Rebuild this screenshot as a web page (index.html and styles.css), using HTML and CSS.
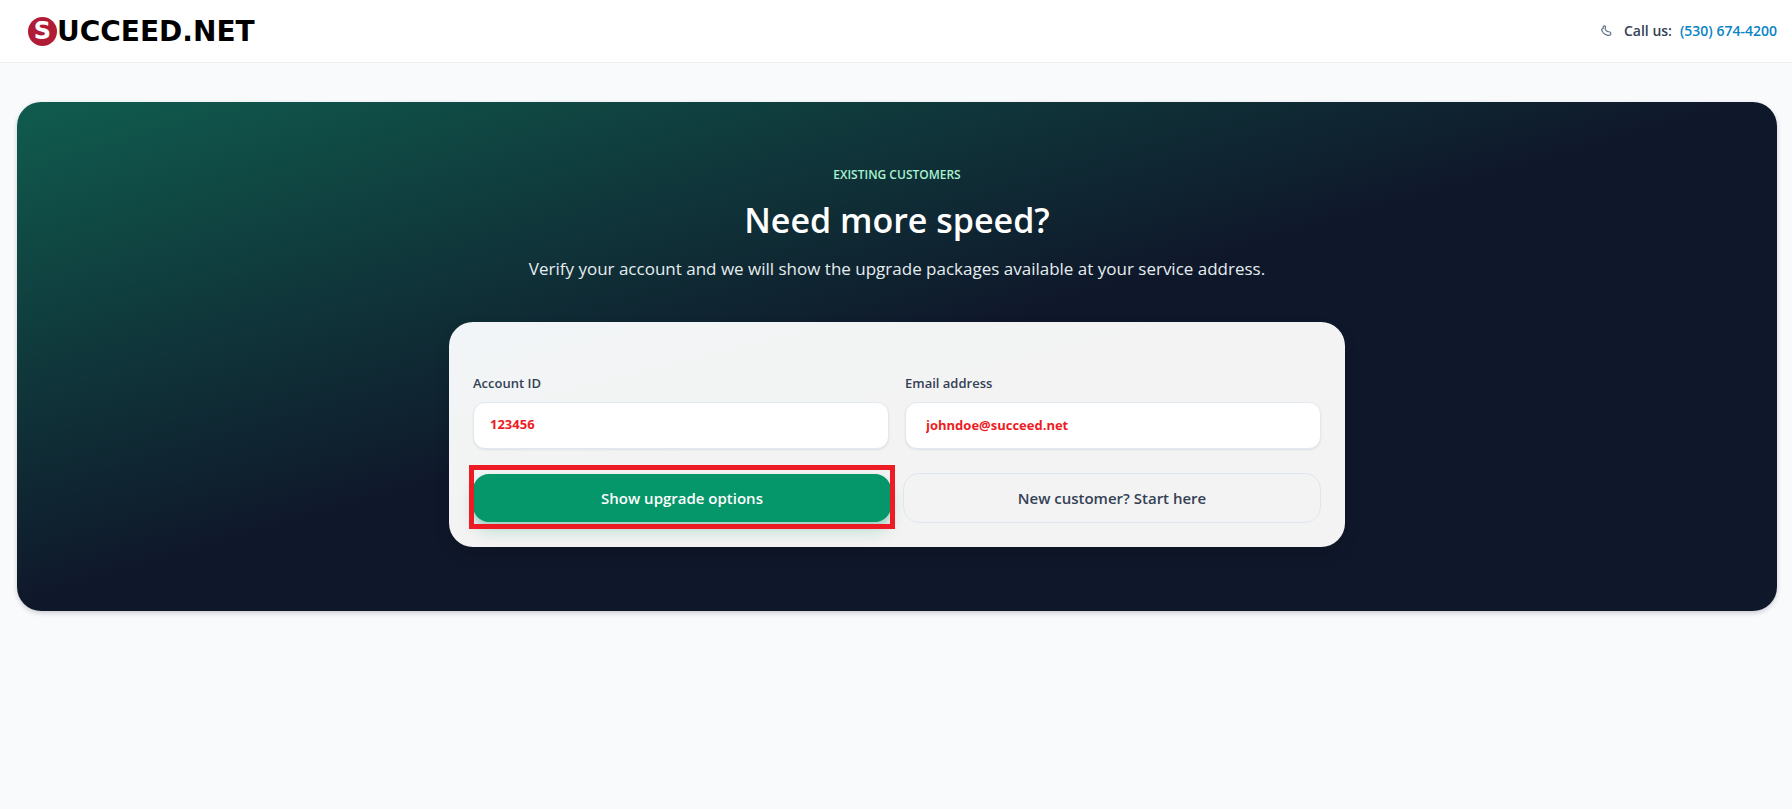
FILE: index.html
```html
<!DOCTYPE html>
<html lang="en">
<head>
<meta charset="utf-8">
<meta name="viewport" content="width=device-width, initial-scale=1">
<title>Succeed.net - Existing customers</title>
<link rel="stylesheet" href="styles.css">
</head>
<body>
<header class="site-header">
  <a class="logo" href="#" aria-label="Succeed.net">
    <span class="logo-mark">S</span><span class="logo-word">UCCEED.NET</span>
  </a>
  <div class="contact">
    <svg class="phone" viewBox="0 0 12 12" aria-hidden="true"><path d="M1.6 4.2 L3.4 3.2 C2.8 1.8 3.4 .9 4.4 .9 C5.5 .9 5.8 1.9 5.2 3 C4.6 4.2 6.3 6 7.8 6.6 C8.6 6.9 10.6 6.6 10.8 7.8 L10.6 9.8 C8.6 11.2 5.2 9.8 3.4 7.8 C2.2 6.4 1.5 5.4 1.6 4.2 Z"/></svg>
    <span>Call us:</span>
    <a class="tel" href="tel:+15306744200">(530) 674-4200</a>
  </div>
</header>
<main class="page">
  <section class="hero">
    <p class="eyebrow">EXISTING CUSTOMERS</p>
    <h1 class="title">Need more speed?</h1>
    <p class="subtitle">Verify your account and we will show the upgrade packages available at your service address.</p>
    <form class="card">
      <div class="fields">
        <div class="field">
          <label for="account">Account ID</label>
          <input class="input" id="account" type="text" value="123456">
        </div>
        <div class="field">
          <label for="email">Email address</label>
          <input class="input input-email" id="email" type="email" value="johndoe@succeed.net">
        </div>
      </div>
      <div class="actions">
        <div class="highlight"><button class="btn btn-primary" type="button">Show upgrade options</button></div>
        <a class="btn btn-outline" href="#">New customer? Start here</a>
      </div>
    </form>
  </section>
</main>
</body>
</html>
```
FILE: styles.css
```css
* { box-sizing: border-box; }
body {
  margin: 0;
  min-height: 100vh;
  background: #f9fafc;
  color: #334155;
  font-family: "Open Sans", "Noto Sans", sans-serif;
}
a { color: inherit; text-decoration: none; }
p, h1 { margin: 0; }

.site-header {
  display: flex;
  align-items: center;
  justify-content: space-between;
  height: 63px;
  padding: 0 15px 0 28px;
  background: #fff;
  border-bottom: 1px solid #eceef1;
}
.logo { display: flex; align-items: center; color: #000; font-family: "DejaVu Sans", sans-serif; font-weight: 700; }
.logo-mark {
  display: flex;
  align-items: center;
  justify-content: center;
  width: 29px;
  height: 29px;
  border-radius: 50%;
  background: #b01c35;
  color: #fff;
  font-size: 24px;
  line-height: 29px;
}
.logo-word { font-size: 28px; line-height: 29px; }
.contact { display: flex; align-items: center; gap: 8px; font-size: 14px; line-height: 20px; font-weight: 600; }
.phone { width: 12px; height: 12px; margin-right: 4px; fill: none; stroke: #64748b; stroke-width: 1.2; stroke-linejoin: round; }
.tel { color: #0a84c6; }

.page { padding: 39px 15px 40px 17px; }
.hero {
  padding: 65px 24px 64px;
  border-radius: 24px;
  background: linear-gradient(to bottom right, #105c4e, #0f172a 50%, #0f172a);
  box-shadow: 0 2px 5px rgba(15, 23, 42, .2);
  text-align: center;
}
.eyebrow { color: #a7f3d0; font-size: 12px; line-height: 16px; font-weight: 600; }
.title { margin-top: 17px; color: #fff; font-size: 34px; line-height: 40px; font-weight: 600; }
.subtitle { margin-top: 15px; color: #e6edf0; font-size: 17px; line-height: 28px; }

.card {
  max-width: 896px;
  margin: 39px auto 0;
  padding: 51px 24px 24px;
  border-radius: 24px;
  background: linear-gradient(to bottom right, #f2f5f8, #f2f4f4 25%, #f3f3f3 45%);
  box-shadow: 0 8px 16px rgba(0, 0, 0, .12);
  text-align: left;
}
.fields { display: grid; grid-template-columns: 1fr 1fr; gap: 16px; }
.field { display: flex; flex-direction: column; gap: 9px; }
.field label { font-size: 13px; line-height: 20px; font-weight: 600; }
.input {
  width: 100%;
  height: 47px;
  padding: 0 16px 4px;
  border: 1px solid #e2e8f0;
  border-radius: 12px;
  background: #fff;
  box-shadow: 0 1px 2px rgba(15, 23, 42, .08);
  color: #ed1c24;
  font: 700 13px/20px "Open Sans", sans-serif;
}
.input-email { padding: 0 20px 2px; }
.actions { display: grid; grid-template-columns: 1fr 1fr; align-items: center; gap: 12px; margin-top: 24px; }
.btn {
  display: flex;
  align-items: center;
  justify-content: center;
  width: 100%;
  border-radius: 16px;
  font: 600 15px/24px "Open Sans", sans-serif;
}
.btn-primary {
  height: 48px;
  border: 0;
  background: #059669;
  color: #fff;
  box-shadow: 0 10px 15px rgba(5, 150, 105, .2), 0 4px 6px rgba(5, 150, 105, .2);
}
.btn-outline { height: 50px; border: 1px solid #dfe6f0; }
.highlight { position: relative; }
.highlight::after {
  content: "";
  position: absolute;
  inset: -9px -4px -7px;
  border: 5px solid #ed1c24;
  pointer-events: none;
}
```
